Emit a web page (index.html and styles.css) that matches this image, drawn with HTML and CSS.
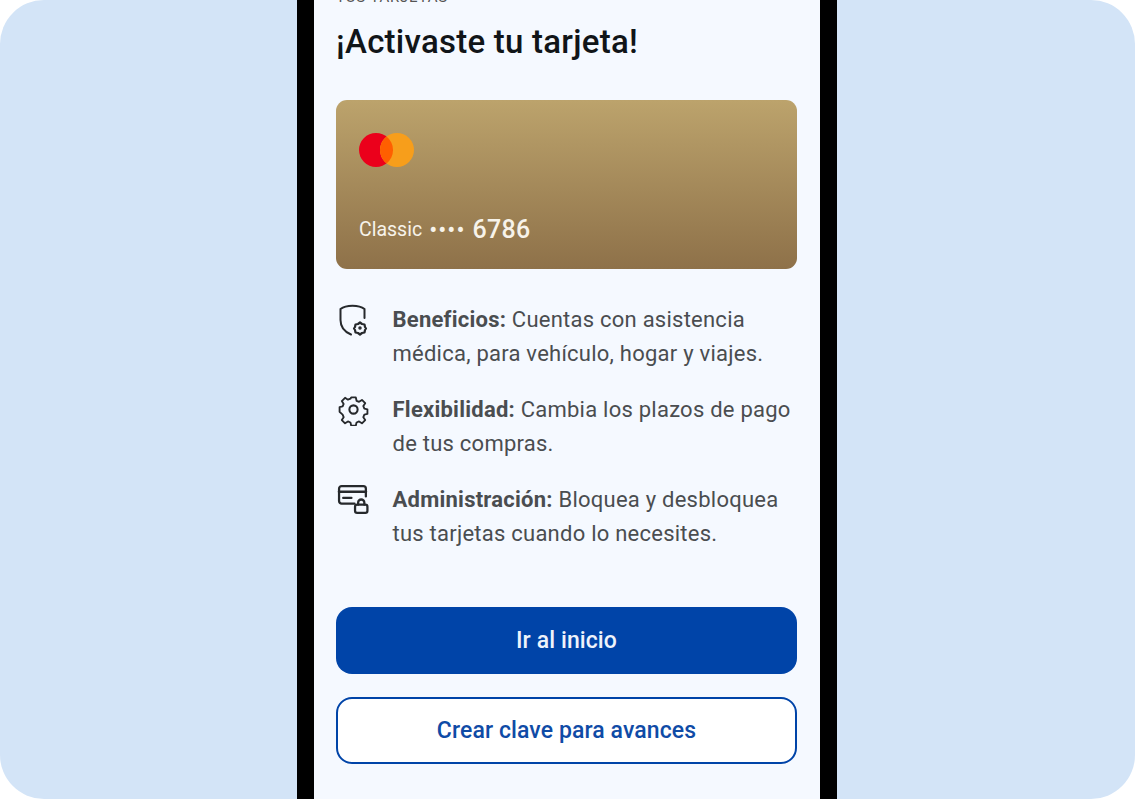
FILE: index.html
```html
<!DOCTYPE html>
<html lang="es">
<head>
  <meta charset="UTF-8">
  <meta name="viewport" content="width=device-width, initial-scale=1.0">
  <title>Activaste tu tarjeta</title>
  <link rel="stylesheet" href="styles.css">
</head>
<body>
  <div class="fondo">
    <div class="telefono">
      <p class="etiqueta">TUS TARJETAS</p>
      <h1>¡Activaste tu tarjeta!</h1>

      <div class="tarjeta">
        <svg class="logo" viewBox="0 0 55 34">
          <circle cx="17" cy="17" r="17" fill="#eb001b"/>
          <circle cx="38" cy="17" r="17" fill="#f79e1b"/>
          <path d="M27.500 3.600a17 17 0 0 1 0 26.800a17 17 0 0 1 0-26.800z" fill="#ff5f00"/>
        </svg>
        <div class="numero">
          <span class="tipo">Classic</span>
          <span class="puntos">••••</span>
          <span class="digitos">6786</span>
        </div>
      </div>

      <ul class="lista">
        <li>
          <svg class="icono" viewBox="0 0 33 33" fill="none" stroke="#26292c" stroke-width="2" stroke-linecap="round" stroke-linejoin="round">
            <path d="M14 31.500C8 29 3.500 24 3.500 17V6C9 1.500 22 1.500 27.500 6V15"/>
            <path d="M23 19.500l2 1.500 2.500.5.5 2.500 1 1.500-1 1.500-.5 2.500-2.500.5-2 1.500-2-1.500-2.500-.5-.5-2.500-1-1.500 1-1.500.5-2.500 2.500-.5z" stroke-width="2.200"/>
            <circle cx="23" cy="25" r="1" stroke-width="1.500"/>
          </svg>
          <p><b>Beneficios:</b> Cuentas con asistencia médica, para vehículo, hogar y viajes.</p>
        </li>
        <li>
          <svg class="icono" viewBox="0 0 32 32" fill="none" stroke="#26292c" stroke-width="2" stroke-linecap="round" stroke-linejoin="round">
            <circle cx="16" cy="16" r="4"/>
            <path d="M13.500 3h5l.8 3.600 2.700 1.100 3.100-2 3.500 3.500-2 3.100 1.100 2.700 3.300.8v5l-3.300.8-1.100 2.700 2 3.100-3.500 3.500-3.100-2-2.700 1.100-.8 3.300h-5l-.8-3.300-2.700-1.100-3.100 2-3.500-3.500 2-3.100-1.100-2.700L1 18.500v-5l3.300-.8 1.100-2.700-2-3.100 3.500-3.500 3.100 2 2.700-1.100z" transform="translate(1.600 1.600) scale(.9)"/>
          </svg>
          <p><b>Flexibilidad:</b> Cambia los plazos de pago de tus compras.</p>
        </li>
        <li>
          <svg class="icono" viewBox="0 0 32 32" fill="none" stroke="#26292c" stroke-width="2.200" stroke-linecap="round" stroke-linejoin="round">
            <path d="M17 20H4.500C3.100 20 2 19 2 17.500V5.500C2 4 3.100 3 4.500 3h21C26.900 3 28 4 28 5.500V13"/>
            <path d="M2 8.500h26" stroke-width="2.600"/>
            <path d="M6 14.500h8"/>
            <rect x="17.500" y="21" width="12" height="8" rx="2"/>
            <path d="M20.500 21v-2a3 3 0 0 1 6 0v2"/>
          </svg>
          <p><b>Administración:</b> Bloquea y desbloquea tus tarjetas cuando lo necesites.</p>
        </li>
      </ul>

      <div class="botones">
        <button class="boton principal">Ir al inicio</button>
        <button class="boton secundario">Crear clave para avances</button>
      </div>
    </div>
  </div>
</body>
</html>
```

FILE: styles.css
```css
html, body {
  margin: 0;
  height: 800px;
  overflow: hidden;
  background: white;
}
.fondo {
  width: 1135px;
  height: 799px;
  border-radius: 44px;
  background: #d3e4f7;
  display: flex;
  justify-content: center;
  overflow: hidden;
}
.telefono {
  box-sizing: border-box;
  flex: none;
  width: 540px;
  height: 800px;
  margin-left: -1px;
  padding: 0 23px 0 22px;
  border-left: 17px solid black;
  border-right: 17px solid black;
  background: #f5f9ff;
  font-family: Roboto, "Liberation Sans", sans-serif;
  overflow: hidden;
}
.etiqueta {
  margin: -11px 0 0;
  font-size: 15px;
  line-height: 16px;
  letter-spacing: .8px;
  color: #555;
}
h1 {
  margin: 16px 0 0;
  font-size: 33px;
  line-height: 42px;
  font-weight: 500;
  letter-spacing: .25px;
  color: #111518;
}
.tarjeta {
  box-sizing: border-box;
  height: 169px;
  margin-top: 37px;
  padding: 33px 23px 0;
  border-radius: 11px;
  background: linear-gradient(#bca36c, #8e7149);
}
.logo {
  display: block;
  width: 55px;
  height: 34px;
}
.numero {
  display: flex;
  align-items: center;
  gap: 7px;
  margin-top: 48px;
  color: #f7f3ea;
}
.tipo {
  font-size: 19.500px;
}
.puntos {
  font-size: 24px;
  letter-spacing: 1px;
}
.digitos {
  font-size: 25px;
  font-weight: 500;
  letter-spacing: .3px;
}
.lista {
  list-style: none;
  margin: 34px 0 0;
  padding: 0;
}
.lista li {
  display: flex;
  gap: 22.500px;
  height: 90px;
}
.icono {
  flex: none;
  width: 33px;
  height: 33px;
  margin-left: 1px;
}
.lista p {
  margin: 0;
  font-size: 22px;
  line-height: 34px;
  letter-spacing: .24px;
  color: #4a4d50;
}
.botones {
  display: flex;
  flex-direction: column;
  gap: 23px;
  margin-top: 34px;
}
.boton {
  height: 67px;
  border-radius: 16px;
  font-family: inherit;
  font-size: 23px;
  font-weight: 500;
  letter-spacing: .1px;
}
.principal {
  border: none;
  background: #0044a8;
  color: #eef3fb;
}
.secundario {
  border: 2.500px solid #0044a8;
  background: white;
  color: #0f4ba6;
}
```
